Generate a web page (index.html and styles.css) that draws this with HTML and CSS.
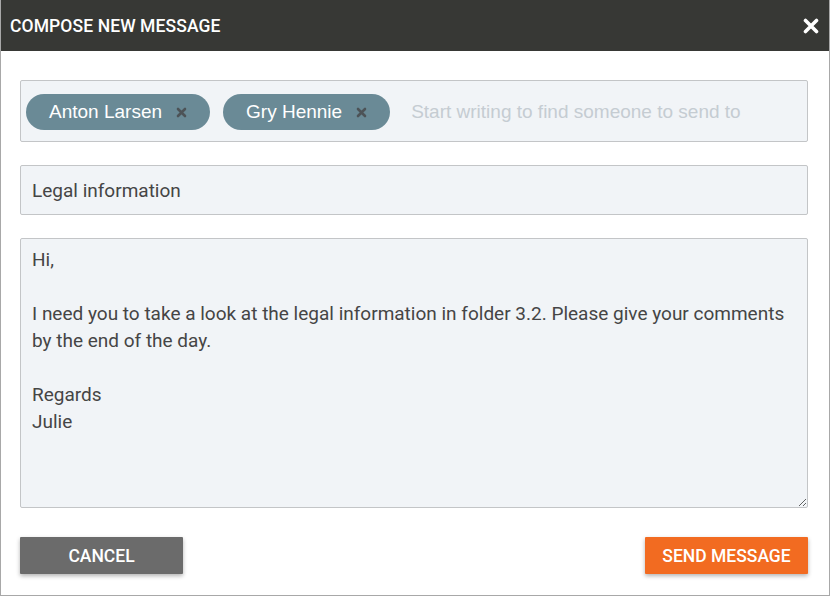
FILE: index.html
```html
<!DOCTYPE html>
<html lang="en">

<head>
    <meta charset="UTF-8">
    <meta name="viewport" content="width=device-width, initial-scale=1.0">
    <title>Compose new message</title>
    <link rel="stylesheet" href="styles.css">
</head>

<body>

    <div class="dialog">
        <div class="dialog-header">
            <h1 class="dialog-title">Compose new message</h1>
            <button class="close-btn" aria-label="Close">
                <svg width="16" height="16" viewBox="0 0 16 16">
                    <path d="M2.5 2.5 L13.5 13.5 M13.5 2.5 L2.5 13.5" stroke="#fff" stroke-width="3.6" stroke-linecap="round" />
                </svg>
            </button>
        </div>

        <div class="dialog-body">
            <div class="recipients">
                <span class="chip">Anton Larsen
                    <svg class="chip-x" width="11" height="11" viewBox="0 0 11 11">
                        <path d="M2 2 L9 9 M9 2 L2 9" stroke="#4d5357" stroke-width="2.6" stroke-linecap="round" />
                    </svg>
                </span>
                <span class="chip">Gry Hennie
                    <svg class="chip-x" width="11" height="11" viewBox="0 0 11 11">
                        <path d="M2 2 L9 9 M9 2 L2 9" stroke="#4d5357" stroke-width="2.6" stroke-linecap="round" />
                    </svg>
                </span>
                <input class="recipient-input" type="text" placeholder="Start writing to find someone to send to">
            </div>

            <input class="field subject" type="text" value="Legal information">

            <textarea class="field message">Hi,

I need you to take a look at the legal information in folder 3.2. Please give your comments by the end of the day.

Regards
Julie</textarea>

            <div class="actions">
                <button class="btn btn-cancel">Cancel</button>
                <button class="btn btn-send">Send message</button>
            </div>
        </div>
    </div>

</body>

</html>
```

FILE: styles.css
```css
body {
    font-family: Roboto, "Liberation Sans", sans-serif;
    margin: 0;
    padding: 0;
    background-color: #fff;
}

.dialog {
    width: 830px;
    height: 596px;
    box-sizing: border-box;
    border: 1px solid #a8a8a8;
    border-top: none;
    display: flex;
    flex-direction: column;
}

.dialog-header {
    height: 51px;
    flex-shrink: 0;
    background-color: #373835;
    display: flex;
    align-items: center;
    justify-content: space-between;
    padding: 0 10px 0 9px;
}

.dialog-title {
    margin: 0;
    color: #fff;
    font-size: 17.5px;
    font-weight: 500;
    text-transform: uppercase;
    letter-spacing: 0.1px;
}

.close-btn {
    border: none;
    background: none;
    padding: 0;
    width: 16px;
    height: 16px;
    cursor: pointer;
    display: flex;
}

.dialog-body {
    padding: 29px 21px 21px 19px;
    display: flex;
    flex-direction: column;
}

.recipients {
    height: 62px;
    box-sizing: border-box;
    background-color: #f1f4f7;
    border: 1px solid #c3c5c7;
    border-radius: 2px;
    display: flex;
    align-items: center;
    gap: 13px;
    padding: 1px 5px 0;
}

.chip {
    height: 36px;
    border-radius: 18px;
    background-color: #6a8a96;
    color: #fff;
    font-family: "Liberation Sans", Arial, sans-serif;
    font-size: 19px;
    display: flex;
    align-items: center;
    gap: 14px;
    padding: 0 23px 0 23px;
    white-space: nowrap;
}

.chip-x {
    margin-top: 2px;
}

.recipient-input {
    flex: 1;
    border: none;
    background: transparent;
    outline: none;
    font-family: "Liberation Sans", Arial, sans-serif;
    font-size: 19px;
    color: #333;
    padding: 0 0 0 8px;
}

.recipient-input::placeholder {
    color: #c5ccd2;
}

.field {
    box-sizing: border-box;
    background-color: #f1f4f7;
    border: 1px solid #c3c5c7;
    border-radius: 2px;
    font-family: Roboto, sans-serif;
    font-size: 19px;
    color: #454545;
    outline: none;
}

.subject {
    height: 50px;
    margin-top: 23px;
    padding: 0 11px;
}

.message {
    height: 270px;
    margin-top: 23px;
    padding: 7px 11px;
    line-height: 27px;
    resize: vertical;
}

.actions {
    display: flex;
    justify-content: space-between;
    margin-top: 29px;
}

.btn {
    width: 163px;
    height: 37px;
    border: none;
    border-radius: 1px;
    color: #fff;
    font-family: Roboto, sans-serif;
    font-size: 17.5px;
    font-weight: 500;
    text-transform: uppercase;
    box-shadow: 0 2px 4px rgba(0, 0, 0, 0.3);
    cursor: pointer;
}

.btn-cancel {
    background-color: #6b6b6b;
}

.btn-send {
    background-color: #f26b21;
}
```
